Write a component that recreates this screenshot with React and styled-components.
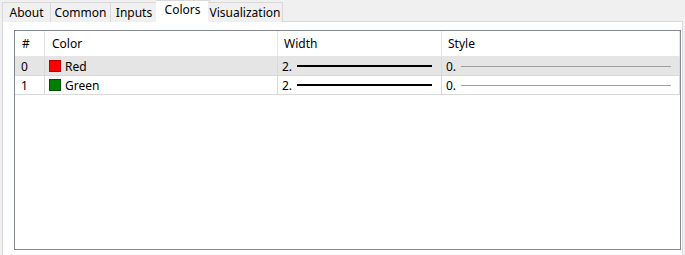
import React from "react";
import styled, { createGlobalStyle } from "styled-components";

const Global = createGlobalStyle`
  html, body {
    margin: 0;
    background: #f0f0f0;
  }
  body {
    font-family: "Noto Sans", "Open Sans", Arial, sans-serif;
    font-size: 12px;
    color: #000;
  }
`;

const Window = styled.div`
  width: 685px;
  height: 255px;
  display: flex;
  flex-direction: column;
  overflow: hidden;
`;

const TabStrip = styled.div`
  height: 22px;
  display: flex;
  align-items: flex-end;
  padding-left: 2px;
  box-sizing: border-box;
  position: relative;
  z-index: 1;
`;

const Tab = styled.div`
  box-sizing: border-box;
  width: ${(p) => p.$w}px;
  height: ${(p) => (p.$active ? 22 : 20)}px;
  margin: ${(p) => (p.$active ? "0 -2px 0 -2px" : "0")};
  display: flex;
  align-items: center;
  justify-content: center;
  background: ${(p) => (p.$active ? "#fff" : "#f0f0f0")};
  border: 1px solid #d9d9d9;
  border-bottom: ${(p) => (p.$active ? "1px solid #fff" : "none")};
  & + & {
    border-left: ${(p) => (p.$active ? "1px solid #d9d9d9" : "none")};
  }
  padding-bottom: ${(p) => (p.$active ? "3px" : "0")};
  line-height: 1;
`;

const Panel = styled.div`
  flex: 1;
  margin: -1px 2px 0 2px;
  background: #fff;
  border: 1px solid #d9d9d9;
  border-bottom: none;
  padding: 8px 0 0 11px;
  box-sizing: border-box;
`;

const List = styled.div`
  width: 667px;
  height: 220px;
  box-sizing: border-box;
  border: 1px solid #828790;
  display: grid;
  grid-template-columns: 30px 233px 164px 1fr;
  grid-auto-rows: 19px;
  grid-template-rows: 26px;
  align-content: start;
`;

const HeadCell = styled.div`
  display: flex;
  align-items: center;
  padding-left: ${(p) => p.$pad || 6}px;
  border-right: 1px solid #e5e5e5;
  border-bottom: 1px solid #e5e5e5;
  box-sizing: border-box;
`;

const Cell = styled.div`
  display: flex;
  align-items: center;
  gap: 4px;
  padding-left: ${(p) => p.$pad || 4}px;
  padding-right: ${(p) => p.$pr || 0}px;
  background: ${(p) => (p.$sel ? "#e5e5e5" : "#fff")};
  border-right: 1px solid #d9d9d9;
  border-bottom: 1px solid #d9d9d9;
  box-sizing: border-box;
`;

const Swatch = styled.span`
  width: 12px;
  height: 12px;
  box-sizing: border-box;
  background: ${(p) => p.$c};
  border: 1px solid ${(p) => p.$b};
  flex: none;
`;

const Line = styled.span`
  flex: 1;
  height: ${(p) => p.$h}px;
  background: ${(p) => p.$c};
  margin-left: 1px;
`;

const rows = [
  { i: 0, name: "Red", c: "#ff0000", b: "#c00000" },
  { i: 1, name: "Green", c: "#008000", b: "#005000" },
];

export default function App() {
  return (
    <Window>
      <Global />
      <TabStrip>
        <Tab $w={49}>About</Tab>
        <Tab $w={60}>Common</Tab>
        <Tab $w={47}>Inputs</Tab>
        <Tab $w={54} $active>Colors</Tab>
        <Tab $w={75}>Visualization</Tab>
      </TabStrip>
      <Panel>
        <List>
          <HeadCell $pad={7}>#</HeadCell>
          <HeadCell $pad={7}>Color</HeadCell>
          <HeadCell>Width</HeadCell>
          <HeadCell>Style</HeadCell>
          {rows.map((r) => (
            <React.Fragment key={r.i}>
              <Cell $sel={r.i === 0} $pad={6}>{r.i}</Cell>
              <Cell $sel={r.i === 0} $pad={4}>
                <Swatch $c={r.c} $b={r.b} />
                {r.name}
              </Cell>
              <Cell $sel={r.i === 0} $pad={4} $pr={9}>
                2.
                <Line $h={2} $c="#000" />
              </Cell>
              <Cell $sel={r.i === 0} $pad={4} $pr={8}>
                0.
                <Line $h={1} $c="#a0a0a0" />
              </Cell>
            </React.Fragment>
          ))}
        </List>
      </Panel>
    </Window>
  );
}
